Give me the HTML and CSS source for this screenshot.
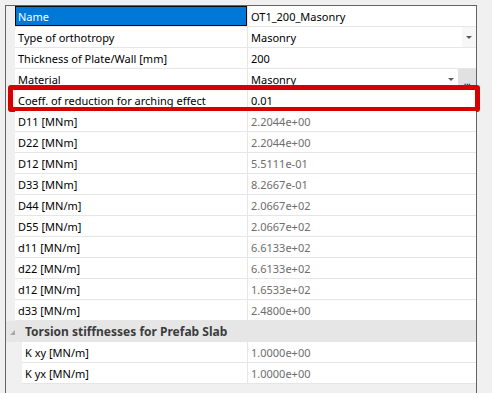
FILE: index.html
```html
<!DOCTYPE html>
<html>
<head>
<meta charset="utf-8">
<link rel="stylesheet" href="styles.css">
</head>
<body>
<div class="frame">
  <div class="row sel"><div class="label">Name</div><div class="value edit">OT1_200_Masonry</div></div>
  <div class="row"><div class="label">Type of orthotropy</div><div class="value edit">Masonry<span class="btn drop"><span class="arrow"></span></span></div></div>
  <div class="row"><div class="label">Thickness of Plate/Wall [mm]</div><div class="value edit">200</div></div>
  <div class="row"><div class="label">Material</div><div class="value edit">Masonry<span class="btn plain"><span class="arrow"></span></span><span class="btn dots">...</span></div></div>
  <div class="row"><div class="label">Coeff. of reduction for arching effect</div><div class="value edit">0.01</div><div class="highlight"></div></div>
  <div class="row"><div class="label">D11 [MNm]</div><div class="value">2.2044e+00</div></div>
  <div class="row"><div class="label">D22 [MNm]</div><div class="value">2.2044e+00</div></div>
  <div class="row"><div class="label">D12 [MNm]</div><div class="value">5.5111e-01</div></div>
  <div class="row"><div class="label">D33 [MNm]</div><div class="value">8.2667e-01</div></div>
  <div class="row"><div class="label">D44 [MN/m]</div><div class="value">2.0667e+02</div></div>
  <div class="row"><div class="label">D55 [MN/m]</div><div class="value">2.0667e+02</div></div>
  <div class="row"><div class="label">d11 [MN/m]</div><div class="value">6.6133e+02</div></div>
  <div class="row"><div class="label">d22 [MN/m]</div><div class="value">6.6133e+02</div></div>
  <div class="row"><div class="label">d12 [MN/m]</div><div class="value">1.6533e+02</div></div>
  <div class="row"><div class="label">d33 [MN/m]</div><div class="value">2.4800e+00</div></div>
  <div class="group"><span class="tri"></span><span class="gtitle">Torsion stiffnesses for Prefab Slab</span></div>
  <div class="row sub"><div class="label">K xy [MN/m]</div><div class="value">1.0000e+00</div></div>
  <div class="row sub"><div class="label">K yx [MN/m]</div><div class="value">1.0000e+00</div></div>
</div>
</body>
</html>
```
FILE: styles.css
```css
html, body {
  margin: 0;
  height: 100%;
}
body {
  background: #f0f0f0;
  font-family: "Noto Sans", "Segoe UI", sans-serif;
  font-size: 11px;
  color: #000;
  overflow: hidden;
}
.frame {
  margin: 5px 0 0 5px;
  width: 470px;
  height: 400px;
  border: 1px solid #646464;
  border-bottom: none;
}
.row {
  position: relative;
  display: flex;
  height: 20px;
  margin-left: 9px;
  background: #fff;
  border-bottom: 1px solid #e6e6e6;
}
.label {
  width: 229px;
  padding-left: 3px;
  border-right: 1px solid #e6e6e6;
  display: flex;
  align-items: center;
  white-space: nowrap;
  overflow: hidden;
}
.value {
  flex: 1;
  padding-left: 3px;
  display: flex;
  align-items: center;
  color: #6d6d6d;
  white-space: nowrap;
}
.value.edit {
  color: #000;
}
.sel .label {
  background: #0078d7;
  color: #fff;
  box-shadow: inset 0 0 0 1px #0a0a0a;
}
.sub {
  margin-left: 16px;
}
.sub .label {
  width: 222px;
}
.btn {
  height: 20px;
  display: flex;
  align-items: center;
  justify-content: center;
}
.btn.drop {
  margin-left: auto;
  width: 14px;
  background: #f7f7f7;
}
.btn.plain {
  margin-left: auto;
  width: 14px;
}
.btn.dots {
  width: 18px;
  background: #e1e1e1;
  color: #222;
  font-size: 10px;
  align-items: flex-end;
  line-height: 15px;
  letter-spacing: -0.5px;
}
.arrow {
  width: 0;
  height: 0;
  border-left: 3px solid transparent;
  border-right: 3px solid transparent;
  border-top: 3px solid #5a5a5a;
}
.highlight {
  position: absolute;
  left: -7px;
  top: -5px;
  width: 472px;
  height: 27px;
  box-sizing: border-box;
  border: 5px solid #d60000;
  border-radius: 3px;
  pointer-events: none;
}
.group {
  display: flex;
  align-items: center;
  height: 21px;
  background: #e6e6e6;
  font-size: 12px;
  font-weight: bold;
  color: #3c3c3c;
}
.tri {
  width: 0;
  height: 0;
  margin-left: 4px;
  margin-top: 1px;
  border-left: 5px solid transparent;
  border-bottom: 5px solid #a8a8a8;
}
.gtitle {
  margin-left: 10px;
}
```
